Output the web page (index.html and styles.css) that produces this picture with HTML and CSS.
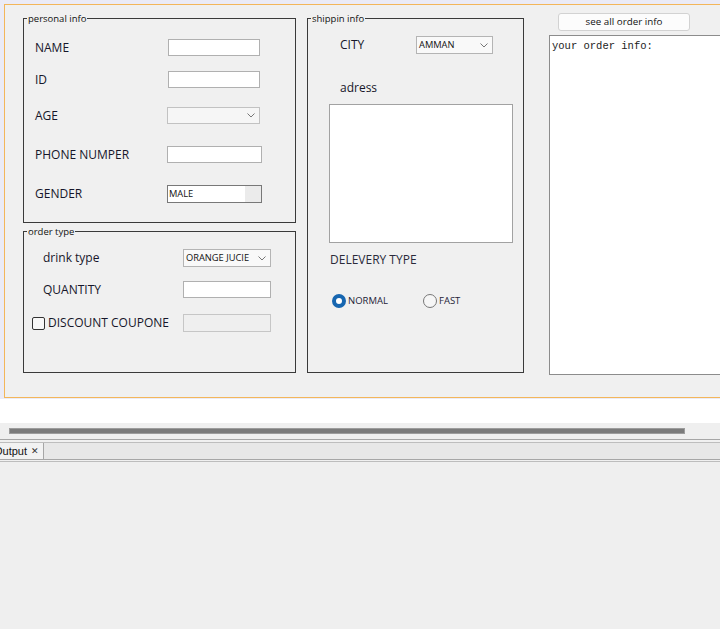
FILE: index.html
```html
<!DOCTYPE html>
<html>
<head>
<meta charset="utf-8">
<link rel="stylesheet" href="styles.css">
</head>
<body>
<div class="designer">
  <div class="frame">
    <div class="col-left">
      <div class="panel personal">
        <span class="legend">personal info</span>
        <div class="row r1"><span class="lbl w133">NAME</span><span class="field w92"></span></div>
        <div class="row r2"><span class="lbl w133">ID</span><span class="field w92"></span></div>
        <div class="row r3"><span class="lbl w132">AGE</span><span class="combo w93 age"><span class="ctext"></span><svg class="chev" width="8" height="5" viewBox="0 0 8 5"><path d="M0.5 0.5 L4 4 L7.5 0.5" fill="none" stroke="#777" stroke-width="1"/></svg></span></div>
        <div class="row r4"><span class="lbl w132">PHONE NUMPER</span><span class="field w95"></span></div>
        <div class="row r5"><span class="lbl w132">GENDER</span><span class="gender">MALE</span></div>
      </div>
      <div class="panel order">
        <span class="legend">order type</span>
        <div class="row o1"><span class="lbl w140">drink type</span><span class="combo w88"><span class="ctext">ORANGE JUCIE</span><svg class="chev" width="8" height="5" viewBox="0 0 8 5"><path d="M0.5 0.5 L4 4 L7.5 0.5" fill="none" stroke="#777" stroke-width="1"/></svg></span></div>
        <div class="row o2"><span class="lbl w140">QUANTITY</span><span class="field w88 h17"></span></div>
        <div class="row o3"><span class="check-wrap"><span class="checkbox"></span><span class="lbl">DISCOUNT COUPONE</span></span><span class="field w88 disabled"></span></div>
      </div>
    </div>
    <div class="panel shipping">
      <span class="legend">shippin info</span>
      <div class="row s1"><span class="lbl w76">CITY</span><span class="combo w77"><span class="ctext">AMMAN</span><svg class="chev" width="8" height="5" viewBox="0 0 8 5"><path d="M0.5 0.5 L4 4 L7.5 0.5" fill="none" stroke="#777" stroke-width="1"/></svg></span></div>
      <div class="lbl adress">adress</div>
      <div class="addr-box"></div>
      <div class="lbl delivery">DELEVERY TYPE</div>
      <div class="radios">
        <span class="opt normal"><span class="radio on"></span><span class="rtext">NORMAL</span></span>
        <span class="opt"><span class="radio"></span><span class="rtext">FAST</span></span>
      </div>
    </div>
    <div class="col-right">
      <div class="btn">see all order info</div>
      <div class="out-area">your order info:</div>
    </div>
  </div>
</div>
<div class="white-gap"></div>
<div class="hscroll"><div class="thumb"></div></div>
<div class="tabs">
  <div class="tabrow">
    <span class="tab"><span class="tab-title">Output</span><span class="tab-x">✕</span></span>
    <span class="tab-fill"></span>
  </div>
  <div class="tabs-bottom"></div>
</div>
<div class="console"></div>
</body>
</html>
```
FILE: styles.css
```css
html, body {
  margin: 0;
  padding: 0;
  width: 720px;
  height: 629px;
  overflow: hidden;
  background: #ffffff;
  font-family: "Open Sans", "Noto Sans", sans-serif;
}

.designer {
  background: #ebebf6;
  padding: 4px 0 1px 4px;
}

.frame {
  width: 716px;
  height: 394px;
  box-sizing: border-box;
  border: 1px solid #f3b65a;
  border-right: none;
  background: #f0f0f0;
  display: flex;
  align-items: flex-start;
  padding-left: 18px;
  overflow: hidden;
}

.frame > * { flex: none; }

.col-left {
  margin-top: 13px;
  display: flex;
  flex-direction: column;
  gap: 8px;
}

.panel {
  position: relative;
  box-sizing: border-box;
  border: 1px solid #3a3a3a;
}

.legend {
  position: absolute;
  top: -6px;
  left: 3px;
  padding: 0 1px;
  background: #f0f0f0;
  font-size: 9.5px;
  line-height: 12px;
  color: #111;
}

.personal {
  width: 273px;
  height: 205px;
  padding-left: 11px;
}

.order {
  width: 273px;
  height: 142px;
}

.row {
  display: flex;
  align-items: center;
}

.lbl {
  font-size: 12px;
  line-height: 16px;
  color: #16162a;
  white-space: nowrap;
}

.w133 { width: 133px; }
.w132 { width: 132px; }
.w140 { width: 140px; }
.w76 { width: 76px; }

.r1 { margin-top: 20px; height: 17px; }
.r2 { margin-top: 15px; height: 17px; }
.r3 { margin-top: 19px; height: 17px; }
.r4 { margin-top: 22px; height: 17px; }
.r5 { margin-top: 22px; height: 18px; }

.field {
  box-sizing: border-box;
  height: 17px;
  background: #ffffff;
  border: 1px solid #b0b0b0;
}

.w92 { width: 92px; }
.w93 { width: 93px; }
.w95 { width: 95px; }
.w88 { width: 88px; }
.w77 { width: 77px; }

.combo {
  box-sizing: border-box;
  height: 17px;
  display: flex;
  align-items: center;
  justify-content: space-between;
  padding: 0 4px 0 2px;
  background: #f9f9f9;
  border: 1px solid #b4b4b4;
}

.combo.age {
  background: #f6f6f6;
  border-color: #c2c2c2;
}

.ctext {
  font-size: 9.3px;
  line-height: 12px;
  color: #111;
  white-space: nowrap;
}

.chev { flex: none; }

.gender {
  box-sizing: border-box;
  width: 95px;
  height: 18px;
  border: 1px solid #787878;
  background: linear-gradient(to right, #ffffff 0, #ffffff 77px, #ebebeb 77px);
  font-size: 9.3px;
  line-height: 16px;
  padding-left: 1px;
  color: #111;
}

/* order panel */
.o1 { margin-top: 17px; height: 18px; padding-left: 19px; }
.o1 .combo { height: 18px; }
.o2 { margin-top: 14px; height: 17px; padding-left: 19px; }
.o3 { margin-top: 16px; height: 18px; padding-left: 8px; }

.check-wrap {
  width: 151px;
  display: flex;
  align-items: center;
  gap: 3px;
}

.checkbox {
  box-sizing: border-box;
  width: 13px;
  height: 13px;
  border: 1px solid #333;
  border-radius: 2px;
  background: #f8f8f8;
}

.field.disabled {
  height: 18px;
  background: #efefef;
  border-color: #c6c6c6;
}

/* shipping panel */
.shipping {
  margin-top: 13px;
  margin-left: 11px;
  width: 217px;
  height: 355px;
}

.s1 { margin-top: 17px; height: 18px; padding-left: 32px; }
.s1 .combo { height: 18px; }

.adress {
  margin-top: 26px;
  margin-left: 32px;
}

.addr-box {
  box-sizing: border-box;
  margin-top: 8px;
  margin-left: 21px;
  width: 184px;
  height: 139px;
  background: #ffffff;
  border: 1px solid #a2a2a2;
}

.delivery {
  margin-top: 9px;
  margin-left: 22px;
  color: #2a2a3a;
}

.radios {
  margin-top: 26px;
  margin-left: 24px;
  height: 14px;
  display: flex;
  align-items: center;
}

.opt {
  display: flex;
  align-items: center;
  gap: 2px;
}

.opt.normal { width: 91px; }

.radio {
  box-sizing: border-box;
  width: 14px;
  height: 14px;
  border-radius: 50%;
  border: 1px solid #777;
  background: #f6f6f6;
}

.radio.on {
  border: 4px solid #1766b0;
  background: #ffffff;
}

.rtext {
  font-size: 9.5px;
  line-height: 12px;
  color: #1e1e38;
}

/* right column */
.col-right {
  margin-top: 8px;
  margin-left: 25px;
  display: flex;
  flex-direction: column;
}

.btn {
  box-sizing: border-box;
  margin-left: 9px;
  width: 132px;
  height: 18px;
  border: 1px solid #d2d2d2;
  border-radius: 3px;
  background: #fcfcfc;
  font-size: 9.8px;
  line-height: 16px;
  text-align: center;
  color: #111;
}

.out-area {
  box-sizing: border-box;
  margin-top: 4px;
  width: 220px;
  height: 340px;
  background: #ffffff;
  border: 1px solid #8c8c8c;
  padding: 4px 0 0 2px;
  font-family: "Liberation Mono", monospace;
  font-size: 10.5px;
  line-height: 13px;
  color: #222;
}

/* bottom IDE area */
.white-gap {
  height: 24px;
  background: #ffffff;
}

.hscroll {
  height: 16px;
  background: #efefef;
  padding-top: 5px;
  box-sizing: border-box;
}

.thumb {
  box-sizing: border-box;
  margin-left: 9px;
  width: 676px;
  height: 6px;
  background: #7b7b7b;
  border: 1px solid #9c9c9c;
}

.tabs {
  border-top: 1px solid #a6a6a6;
  padding-top: 2px;
  background: #f0f0f0;
}

.tabrow {
  border-top: 1px solid #bdbdbd;
  border-bottom: 1px solid #a6a6a6;
  height: 16px;
  display: flex;
}

.tab {
  display: flex;
  align-items: center;
  gap: 4px;
  margin-left: -6px;
  padding-right: 4px;
  border-right: 1px solid #a6a6a6;
  background: #f2f2f2;
  font-family: "Liberation Sans", sans-serif;
}

.tab-title {
  font-size: 11px;
  color: #111;
}

.tab-x {
  font-size: 9px;
  color: #333;
}

.tab-fill {
  flex: 1;
  background: #e7e7e7;
}

.tabs-bottom {
  margin-top: 1px;
  border-top: 1px solid #bdbdbd;
}

.console {
  height: 167px;
  background: #efefef;
}
```
